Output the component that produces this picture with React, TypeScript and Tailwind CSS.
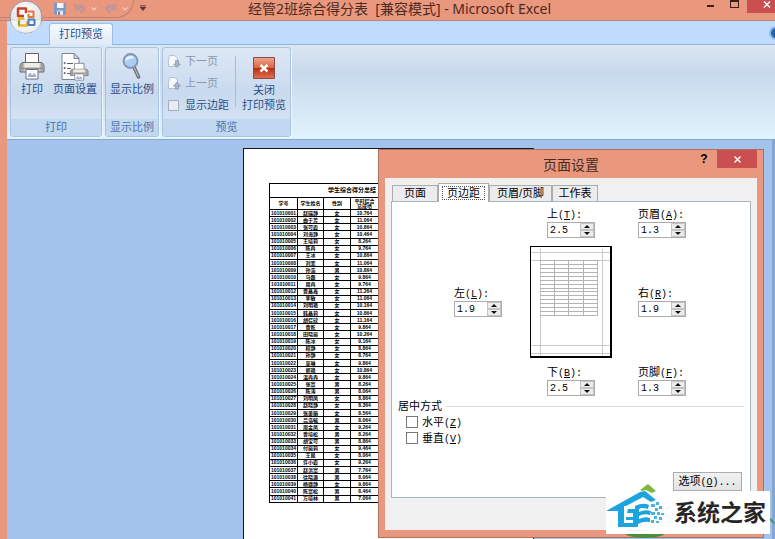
import { ReactNode } from "react";
import { clsx } from "clsx";

type Student = { id: string; name: string; sex: string; score: string };

const names = [
  "赵瑞静", "曲于芳", "张可霞", "刘海静", "王培莉", "陈冉", "王冰", "刘菲", "孙浩", "马磊", "周冉",
  "贾晶鑫", "李敏", "刘明艳", "韩晶莉", "胡召欣", "曹乾", "田晓丽", "陈冰", "程静", "孙静", "吴琳",
  "郭艳", "温冉冉", "张富", "陈涛", "刘明凤", "赵晓静", "张美娟", "吕浩毓", "周金凤", "曹培松",
  "胡宝可", "付丽莉", "王昆", "许小霞", "赵洪富", "徐晓源", "杨德静", "陈富松", "方培林",
];

const scores = [
  "10.764", "11.064", "10.864", "10.464", "8.264", "9.764", "10.864", "11.064", "10.864", "9.864",
  "9.764", "11.264", "11.064", "10.164", "10.864", "11.164", "9.864", "10.264", "9.164", "8.864",
  "8.764", "9.864", "10.864", "9.864", "8.264", "8.064", "8.864", "8.364", "8.564", "8.064", "9.264",
  "8.264", "8.864", "9.464", "8.064", "9.264", "7.764", "8.064", "9.864", "8.464", "7.064",
];

const maleRows = [8, 24, 25, 29, 31, 32, 36, 37, 39, 40];

const students: Student[] = names.map((name, i) => ({
  id: "1010100" + String(i + 1).padStart(2, "0"),
  name,
  sex: maleRows.includes(i) ? "男" : "女",
  score: scores[i],
}));

const uiFont = "font-['Liberation_Sans','Noto_Sans_CJK_SC',sans-serif]";
const captionFont = "font-['Noto_Sans','Noto_Sans_CJK_SC',sans-serif]";

/* ---------- icons ---------- */

function OfficeLogo() {
  return (
    <svg viewBox="0 0 34 34" className="size-[34px]">
      <defs>
        <radialGradient id="orb" cx="50%" cy="30%" r="75%">
          <stop offset="0" stopColor="#ffffff" />
          <stop offset="0.6" stopColor="#e6e6ea" />
          <stop offset="1" stopColor="#b2b6c2" />
        </radialGradient>
      </defs>
      <circle cx="17" cy="17" r="16" fill="url(#orb)" stroke="#9a8f95" />
      <path d="M2 20a15 13 0 0 0 30 0a22 9 0 0 1-30 0z" fill="#fff" opacity=".7" />
      <g fill="none" strokeWidth="2.4" strokeLinejoin="round">
        <path d="M15 16H9V8.500h8V13" stroke="#c8432b" />
        <path d="M18.500 11.500h6V17h-5v-3" stroke="#e9772e" strokeWidth="2" />
        <path d="M15.500 18.500H10v7h8v-4" stroke="#eab32c" />
        <path d="M10 21v4.500" stroke="#5aa147" strokeWidth="1.500" />
        <path d="M19.500 19.500h6v5.500h-6z" stroke="#4d7fc4" strokeWidth="2" />
      </g>
      <path d="M15 15h3v3h-3z" fill="#fff" />
    </svg>
  );
}

function SaveIcon() {
  return (
    <svg viewBox="0 0 12 12" className="size-3">
      <path d="M0 0h12v12H1.500L0 10.500z" fill="#8098c4" />
      <path d="M3 0h6.500v5H3z" fill="#f2f5fb" />
      <path d="M3 7.500h6V12H3z" fill="#dfe5f1" />
      <path d="M4 8.500h2V12H4z" fill="#6b7fa9" />
    </svg>
  );
}

function UndoIcon({ flip }: { flip?: boolean }) {
  return (
    <svg viewBox="0 0 12 12" className={clsx("size-3", flip && "-scale-x-100")}>
      <path d="M1 1v5.500h5.500L4.500 4.700Q8.500 2.800 8.300 6.500 8 8.500 6 10q5-1.200 5-5Q10 .5 3 3z" fill="#c29aa0" stroke="#a98a96" strokeWidth=".5" />
    </svg>
  );
}

function SmallChevron() {
  return (
    <svg viewBox="0 0 6 4" className="h-1 w-1.5">
      <path d="M.5.5L3 3 5.500.5" fill="none" stroke="#f6cdbf" strokeWidth="1.200" />
    </svg>
  );
}

function PrinterShape() {
  return (
    <g>
      <path d="M6 0.500h13v11H6z" fill="#fff" stroke="#5d6372" />
      <path d="M2.500 9.500h20l2 3v6.500h-24v-6.500z" fill="#ccc8c4" stroke="#6d6a6c" />
      <path d="M5 10h15v4H5z" fill="#efedea" />
      <path d="M1 15.500h23" stroke="#8c8884" />
      <path d="M1 10h3v9H1zM21 10h3v9h-3z" fill="#8e8c8e" opacity=".6" />
      <path d="M6.500 16.500h12v9.500h-12z" fill="#fff" stroke="#6a7284" />
      <path d="M8.500 23.500l2-3.500 2 3 2-2.500 2 3z" fill="#a3bbdc" stroke="#6e88b4" strokeWidth=".6" />
    </g>
  );
}

function PrintIcon() {
  return (
    <svg viewBox="0 0 25 27" className="h-[27px] w-[26px]">
      <PrinterShape />
    </svg>
  );
}

function PageSetupIcon() {
  return (
    <svg viewBox="0 0 28 28" className="size-7">
      <path d="M1 .5h12l5 5V26.500H1z" fill="#fff" stroke="#7a8396" />
      <path d="M13 .5v5h5z" fill="#d8dfea" stroke="#7a8396" />
      <g stroke="#5a6070" fill="#5a6070">
        <path d="M6 10.500h6M6 15.500h4M6 20.500h3" />
        <path d="M3 9.500h1.200v1.200H3zM3 14.500h1.200v1.200H3zM3 19.500h1.200v1.200H3z" strokeWidth=".6" />
      </g>
      <g transform="translate(9 10) scale(.74 .66)">
        <PrinterShape />
      </g>
    </svg>
  );
}

function ZoomIcon() {
  return (
    <svg viewBox="0 0 20 27" className="h-[27px] w-5">
      <path d="M12 14l4.500 10" stroke="#6d7078" strokeWidth="3.600" strokeLinecap="round" />
      <path d="M12 14l4.300 9.500" stroke="#b4b6bd" strokeWidth="1.200" strokeLinecap="round" />
      <circle cx="8.500" cy="8" r="7" fill="#a9cdf5" stroke="#8593ae" strokeWidth="1.800" />
      <path d="M3.500 8a5 5 0 0 1 9-3q-5 0-9 3z" fill="#eaf5ff" />
    </svg>
  );
}

function PageArrowIcon({ up }: { up?: boolean }) {
  return (
    <svg viewBox="0 0 13 13" className="size-[13px]">
      <path d="M1.500 .5h5l3 2.500v8.500h-9v-6z" fill="#f5f8fc" stroke="#b4c1d3" />
      <path
        d={up ? "M9 5l3.500 4H10.500v3h-3V9H5.500z" : "M9 12.500L5.500 9H7.500V5.500h3V9h2z"}
        fill="#a7b3c6"
        stroke="#8795ab"
        strokeWidth=".7"
      />
    </svg>
  );
}

function ClosePreviewIcon() {
  return (
    <svg viewBox="0 0 22 22" className="size-[22px]">
      <defs>
        <linearGradient id="red" x1="0" y1="0" x2="0" y2="1">
          <stop offset="0" stopColor="#eba892" />
          <stop offset=".48" stopColor="#d96545" />
          <stop offset=".52" stopColor="#b92d13" />
          <stop offset="1" stopColor="#df7350" />
        </linearGradient>
      </defs>
      <path d="M.5.5h21v21H.5z" fill="url(#red)" stroke="#8c4a44" />
      <path d="M7.500 8l7 6.500M14.500 8l-7 6.500" stroke="#fff" strokeWidth="2.400" />
    </svg>
  );
}

function HouseLogo() {
  return (
    <svg viewBox="0 0 62 50" className="h-[50px] w-[62px] shrink-0">
      <path d="M34 6l8-6 8 7-4 2-6-3-4 1z" fill="#7db841" />
      <path d="M0 27L34 8l5-1 11 9-5 2-8-5-17 9h-2v5z" fill="#1ba4de" />
      <path d="M12 25h6v14h11v4H12z" fill="#1ba4de" />
      <path d="M22 25h7v-3q8-4 14-1l-1 4q-6-2-9 0v3q6-3 12-1l-1 4q-6-2-11 1v3q6-3 11-1v4q-7-1-12 2v3h-5V29h-6z" fill="#1ba4de" />
      <path d="M20 33h8v3h-8z" fill="#1ba4de" />
      <path
        d="M45 20h4v3h-4zM50 18h3v3h-3zM53 22h3v3h-3zM49 24h3v3h-3zM45 28h4v3h-4zM51 28h3v3h-3zM55 29h3v2h-3zM48 32h3v3h-3zM53 33h3v3h-3zM45 36h3v3h-3zM50 37h3v2h-3z"
        fill="#45b4e4"
      />
      <path d="M13 45q18 3 35 0-18 4-35 0z" fill="#bfe6f6" />
    </svg>
  );
}

/* ---------- main window ---------- */

function TitleBar() {
  return (
    <header className="relative flex h-[21px] shrink-0 items-start border-b border-[#b98577] bg-[#e9987d]">
      <div className="flex h-[18px] w-[134px] items-center rounded-br-full border-r border-b border-[#b98476] pl-[54px]">
        <button aria-label="保存"><SaveIcon /></button>
        <button aria-label="撤消" className="ml-2 flex items-center gap-[5px]"><UndoIcon /><SmallChevron /></button>
        <button aria-label="恢复" className="ml-2 flex items-center gap-[5px]"><UndoIcon flip /><SmallChevron /></button>
      </div>
      <button aria-label="自定义快速访问工具栏" className="ml-[6px] pt-[5px]">
        <svg viewBox="0 0 6 6" className="size-1.5">
          <path d="M0 .5h6M0 2h6L3 5.500z" fill="#5b2f3c" stroke="#5b2f3c" strokeWidth=".6" />
        </svg>
      </button>
      <h1 className={clsx("flex-1 pl-[102px] text-[14px] leading-[17px] whitespace-nowrap text-[#4b2a22]", captionFont)}>
        经管2班综合得分表&nbsp; [兼容模式] - Microsoft Excel
      </h1>
      <button aria-label="最小化" className="mr-[16px] pt-[5px]"><span className="block h-0.5 w-[7px] bg-[#3a1e18]" /></button>
      <button aria-label="最大化" className="mr-2"><span className="block h-2 w-[9px] border border-t-2 border-[#3a1e18]" /></button>
      <button aria-label="关闭" className="flex h-[13px] w-7 justify-end bg-[#c94f50] pt-px pr-1">
        <svg viewBox="0 0 8 7" className="h-[7px] w-2"><path d="M1 .5l6 6M7 .5l-6 6" stroke="#fff" strokeWidth="1.400" /></svg>
      </button>
      <button aria-label="Office 按钮" className="absolute top-0 left-[9px]"><OfficeLogo /></button>
    </header>
  );
}

function Group({ title, children }: { title: string; children: ReactNode }) {
  return (
    <section className="flex flex-col overflow-hidden rounded-[3px] border border-[#a9c2e0] bg-linear-to-b from-[#dde8f5] via-[#c9daee] to-[#d8e6f6] shadow-[1px_1px_0_#eef5fc]">
      <div className="flex flex-1">{children}</div>
      <h2 className="h-[17px] bg-[#c1d8f1] text-center text-[11px] leading-4 text-[#4a73ae]">{title}</h2>
    </section>
  );
}

function BigButton({ icon, children }: { icon: ReactNode; children: ReactNode }) {
  return (
    <button className="flex flex-col items-center pt-[3px] text-[11px] leading-[15px] whitespace-nowrap text-[#274d8c]">
      <span className="flex h-[31px] items-center">{icon}</span>
      <span>{children}</span>
    </button>
  );
}

function Ribbon() {
  return (
    <>
      <nav className="flex h-6 shrink-0 items-end justify-between border-b border-[#8fb4e0] bg-[#bfdbff] pl-[42px]">
        <button className="-mb-px h-[22px] w-16 rounded-t-[3px] border border-b-0 border-[#9dbde4] bg-linear-to-b from-[#f5faff] to-[#dfeaf7] text-[11px] text-[#274d8c]">
          打印预览
        </button>
        <button aria-label="帮助" className="-mr-2 mb-1 size-[14px] rounded-full border-2 border-[#8dbbea] bg-[#1f66b8]" />
      </nav>
      <div className="flex h-[95px] shrink-0 gap-[3px] border-b border-[#86a9d4] bg-linear-to-b from-[#dbe6f2] via-[#c8d9ec] via-30% to-[#e0f3fc] py-[2px] pl-[3px]">
        <Group title="打印">
          <div className="flex gap-2 pr-1 pl-2">
            <BigButton icon={<PrintIcon />}>打印</BigButton>
            <BigButton icon={<PageSetupIcon />}>页面设置</BigButton>
          </div>
        </Group>
        <Group title="显示比例">
          <div className="px-1">
            <BigButton icon={<ZoomIcon />}>显示比例</BigButton>
          </div>
        </Group>
        <Group title="预览">
          <div className="flex flex-col pt-[2px] pl-[5px] text-[11px] whitespace-nowrap">
            <button disabled className="flex h-[22px] items-center gap-1 text-[#8b98ad]"><PageArrowIcon />下一页</button>
            <button disabled className="flex h-[22px] items-center gap-1 text-[#8b98ad]"><PageArrowIcon up />上一页</button>
            <label className="flex h-[22px] items-center gap-[6px] text-[#274d8c]">
              <input type="checkbox" className="size-[11px] appearance-none border border-[#a3afbf] bg-[#e9edf2]" />
              显示边距
            </label>
          </div>
          <div className="mx-[6px] mt-2 mb-3 w-px bg-[#a5bdda]" />
          <div className="pr-1 pt-px">
            <BigButton icon={<ClosePreviewIcon />}>关闭<br />打印预览</BigButton>
          </div>
        </Group>
      </div>
    </>
  );
}

function PreviewPage() {
  return (
    <div className="mt-2 ml-[236px] h-[480px] w-[291px] shrink-0 border border-[#10182a] bg-white pt-[34px] pl-[25px]">
      <table className="h-[320px] w-[240px] table-fixed border-collapse border border-black text-center text-[5px] leading-[5px] font-bold text-black [&_td]:border [&_td]:border-black [&_td]:p-0 [&_th]:border [&_th]:border-black [&_th]:p-0">
        <colgroup>
          <col className="w-[28px]" />
          <col className="w-[26px]" />
          <col className="w-[27px]" />
          <col className="w-[159px]" />
        </colgroup>
        <thead>
          <tr className="h-[14px]">
            <th colSpan={4} className="text-left text-[6px] whitespace-nowrap"><span className="ml-[58px]">学生综合得分总结</span></th>
          </tr>
          <tr className="h-3">
            <th>学号</th><th>学生姓名</th><th>性别</th>
            <th><span className="block w-[27px]">平时综合<br />总成绩</span></th>
          </tr>
        </thead>
        <tbody>
          {students.map((s) => (
            <tr key={s.id}>
              <td>{s.id}</td><td>{s.name}</td><td>{s.sex}</td>
              <td><span className="block w-[27px]">{s.score}</span></td>
            </tr>
          ))}
        </tbody>
      </table>
    </div>
  );
}

/* ---------- page setup dialog ---------- */

function Hotkey({ k, suffix }: { k: string; suffix?: string }) {
  return <span className="font-['Liberation_Mono',monospace] text-[10px]">(<u>{k}</u>){suffix}</span>;
}

function MarginField({ label, hotkey, value, className }: { label: string; hotkey: string; value: string; className?: string }) {
  const id = "margin-" + hotkey;
  return (
    <div className={clsx("w-12", className)}>
      <label htmlFor={id} className="block h-[14px] leading-[13px] whitespace-nowrap">{label}<Hotkey k={hotkey} suffix=":" /></label>
      <div className="flex h-4 border border-[#acacac] bg-white">
        <input id={id} defaultValue={value} className="w-0 flex-1 pl-0.5 font-['Liberation_Mono',monospace] text-[10px] outline-none" />
        <div className="flex w-[14px] flex-col">
          <button aria-label="增加" className="flex flex-1 items-center justify-center border border-[#c4c4c4] bg-[#ececec]">
            <svg viewBox="0 0 6 3" className="h-[3px] w-1.5"><path d="M0 3l3-3 3 3z" fill="#111" /></svg>
          </button>
          <button aria-label="减少" className="flex flex-1 items-center justify-center border border-[#c4c4c4] bg-[#ececec]">
            <svg viewBox="0 0 6 3" className="h-[3px] w-1.5"><path d="M0 0l3 3 3-3z" fill="#111" /></svg>
          </button>
        </div>
      </div>
    </div>
  );
}

function SheetDiagram() {
  const rows = Array.from({ length: 15 }, (_, i) => 14.5 + Math.round(i * 3.93));
  return (
    <svg viewBox="0 0 82 112" className="h-28 w-[82px]" shapeRendering="crispEdges">
      <path d="M0 0h82v112H0z" fill="#000" />
      <path d="M1 1h79v109H1z" fill="#fff" />
      <path d="M1 6.500h79M1 14.500h79M1 99.500h79M1 107.500h79M10.500 3v107M72.500 3v107" stroke="#c9c9c9" />
      <path d="M24.500 14v56M38.500 14v56M53.500 14v56M67.500 14v56" stroke="#b4b4b4" />
      {rows.map((y) => (
        <path key={y} d={`M10 ${y}h57`} stroke="#b4b4b4" />
      ))}
    </svg>
  );
}

const tabs = [
  { label: "页面", size: "w-[46px]" },
  { label: "页边距", size: "w-[51px]" },
  { label: "页眉/页脚", size: "w-[63px]" },
  { label: "工作表", size: "w-[46px]" },
];

function PageSetupDialog() {
  return (
    <div role="dialog" aria-label="页面设置" className="absolute top-[149px] left-[378px] flex h-[389px] w-[386px] flex-col border border-[#b0705f] bg-[#e9987d] px-[6px] pb-[7px] text-[11px] text-black">
      <div className="relative flex h-7 shrink-0 items-center justify-center">
        <h2 className={clsx("text-[14px] text-[#4b2a22]", captionFont)}>页面设置</h2>
        <div className="absolute top-0 right-0 flex">
          <button aria-label="帮助" className="w-[26px] font-['Liberation_Sans',sans-serif] text-[12px] font-bold">?</button>
          <button aria-label="关闭" className="flex h-[18px] w-10 items-center justify-center bg-[#c94f50]">
            <svg viewBox="0 0 7 7" className="size-[7px]"><path d="M.5.5l6 6M6.500.5l-6 6" stroke="#fff" strokeWidth="1.400" /></svg>
          </button>
        </div>
      </div>
      <div className="flex flex-1 flex-col bg-[#f0f0f0] px-[6px] pt-[5px] pb-8">
        <div className="flex h-[18px] items-end pl-px" role="tablist">
          {tabs.map((t, i) => (
            <button
              key={t.label}
              role="tab"
              aria-selected={i === 1}
              className={clsx(
                "border border-[#acacac] leading-[15px] whitespace-nowrap",
                t.size,
                i === 1 ? "relative -mb-px h-[19px] border-b-0 bg-white" : "h-4 border-b-0 bg-[#ececec]",
              )}
            >
              <span className={clsx(i === 1 && "border border-dotted border-[#555] px-1")}>{t.label}</span>
            </button>
          ))}
        </div>
        <div className="flex flex-1 flex-col border border-[#a9b4bd] bg-white">
          <div className="grid grid-cols-[76px_82px_auto] items-center gap-y-2 pt-[6px] pl-[62px]">
            <MarginField label="上" hotkey="T" value="2.5" className="col-start-2 justify-self-center" />
            <MarginField label="页眉" hotkey="A" value="1.3" className="ml-[26px]" />
            <MarginField label="左" hotkey="L" value="1.9" className="col-start-1" />
            <SheetDiagram />
            <MarginField label="右" hotkey="R" value="1.9" className="ml-[26px]" />
            <MarginField label="下" hotkey="B" value="2.5" className="col-start-2 justify-self-center" />
            <MarginField label="页脚" hotkey="F" value="1.3" className="ml-[26px]" />
          </div>
          <div role="group" aria-labelledby="center-title" className="mt-0.5 px-[6px]">
            <div className="flex h-4 items-center gap-1">
              <span id="center-title">居中方式</span>
              <span className="h-px flex-1 bg-[#dcdcdc]" />
            </div>
            <label className="flex h-4 items-center gap-1 pl-2">
              <input type="checkbox" className="size-3 appearance-none border border-[#777] bg-white" />
              <span>水平<Hotkey k="Z" /></span>
            </label>
            <label className="flex h-4 items-center gap-1 pl-2">
              <input type="checkbox" className="size-3 appearance-none border border-[#777] bg-white" />
              <span>垂直<Hotkey k="V" /></span>
            </label>
          </div>
          <button className="mt-auto mr-2 mb-[6px] h-[19px] w-[69px] self-end border border-[#acacac] bg-linear-to-b from-[#f1f1f1] to-[#e3e3e3] leading-4 whitespace-nowrap">
            选项<Hotkey k="O" suffix="..." />
          </button>
        </div>
      </div>
    </div>
  );
}

function Watermark() {
  return (
    <div className="absolute right-[5px] bottom-[5px]">
      <div className="absolute -bottom-[4px] left-[18px] h-3 w-[42px] rounded-[50%] bg-[#4a8f3c]" />
      <div className="absolute -right-[6px] bottom-[14px] h-0.5 w-3 rotate-45 bg-[#3d9a6a]" />
      <div className="relative flex h-[43px] items-end bg-white pr-1">
        <HouseLogo />
        <span className="ml-[6px] text-[23px] leading-[42px] font-bold whitespace-nowrap text-[#262626]">系统之家</span>
      </div>
    </div>
  );
}

export default function App() {
  return (
    <div className={clsx("relative flex h-screen flex-col overflow-hidden bg-[#e9987d]", uiFont)}>
      <TitleBar />
      <div className="ml-[7px] flex min-h-0 flex-1 flex-col">
        <Ribbon />
        <main className="flex min-h-0 flex-1 items-start overflow-hidden border-r-[3px] border-[#86a6d2] bg-[#a3c3ec]">
          <PreviewPage />
        </main>
      </div>
      <PageSetupDialog />
      <Watermark />
    </div>
  );
}
